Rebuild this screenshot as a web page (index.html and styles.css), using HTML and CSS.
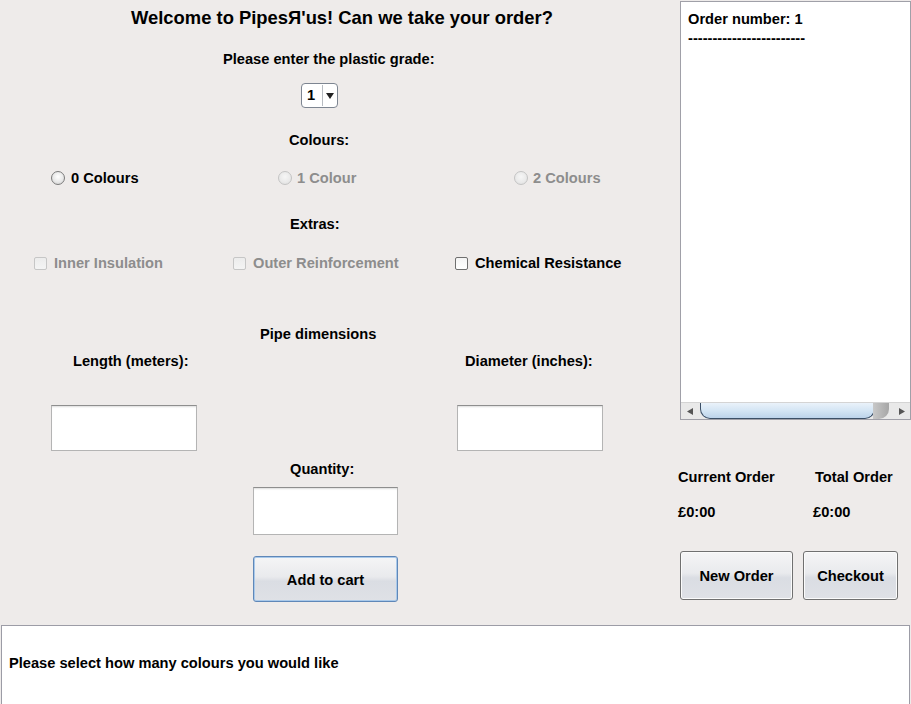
FILE: index.html
```html
<!DOCTYPE html>
<html>
<head>
<meta charset="utf-8">
<link rel="stylesheet" href="styles.css">
</head>
<body>
<div class="top">
  <div class="form">
    <div class="row title">Welcome to PipesЯ'us! Can we take your order?</div>
    <div class="row plastic">Please enter the plastic grade:</div>
    <div class="combo"><span class="combo-val">1</span><span class="combo-btn"><svg width="8" height="6" viewBox="0 0 8 6"><path d="M0 0H8L4 6Z" fill="#222"/></svg></span></div>
    <div class="row colours-lbl">Colours:</div>
    <div class="row radios">
      <label class="opt"><span class="radio"></span>0 Colours</label>
      <label class="opt dis"><span class="radio"></span>1 Colour</label>
      <label class="opt dis"><span class="radio"></span>2 Colours</label>
    </div>
    <div class="row extras-lbl">Extras:</div>
    <div class="row checks">
      <label class="opt dis"><span class="check"></span>Inner Insulation</label>
      <label class="opt dis"><span class="check"></span>Outer Reinforcement</label>
      <label class="opt"><span class="check"></span>Chemical Resistance</label>
    </div>
    <div class="row pipe-lbl">Pipe dimensions</div>
    <div class="row dims-lbl"><span>Length (meters):</span><span>Diameter (inches):</span></div>
    <div class="dims-fields"><div class="field"></div><div class="field"></div></div>
    <div class="row qty-lbl">Quantity:</div>
    <div class="field qty"></div>
    <div class="btn add">Add to cart</div>
  </div>
  <div class="side">
    <div class="order-panel">
      <div class="order-text">
        <div>Order number: 1</div>
        <div>------------------------</div>
      </div>
      <div class="hscroll">
        <span class="arrow"><svg width="6" height="7" viewBox="0 0 6 7"><path d="M0 3.5L6 0V7Z" fill="#555"/></svg></span>
        <span class="track"><span class="thumb"></span><span class="thumb-end"></span></span>
        <span class="arrow"><svg width="6" height="7" viewBox="0 0 6 7"><path d="M6 3.5L0 0V7Z" fill="#555"/></svg></span>
      </div>
    </div>
    <div class="row totals-lbl"><span>Current Order</span><span>Total Order</span></div>
    <div class="row totals-val"><span>£0:00</span><span>£0:00</span></div>
    <div class="side-btns"><div class="btn new">New Order</div><div class="btn checkout">Checkout</div></div>
  </div>
</div>
<div class="bottom">Please select how many colours you would like</div>
</body>
</html>
```
FILE: styles.css
```css
html, body {
  margin: 0;
  padding: 0;
}
body {
  background: #eeebea;
  font-family: "Liberation Sans", Arial, sans-serif;
  font-weight: bold;
  font-size: 14.65px;
  color: #000;
  width: 911px;
  height: 704px;
  overflow: hidden;
}
.top {
  display: flex;
  height: 625px;
}
.form {
  width: 678px;
  display: flex;
  flex-direction: column;
  align-items: flex-start;
}
.row {
  line-height: 16px;
  white-space: nowrap;
}
.title {
  font-size: 18.4px;
  line-height: 22px;
  margin-top: 7px;
  padding-left: 131px;
}
.plastic {
  margin-top: 22px;
  padding-left: 223px;
}
.combo {
  margin-top: 16px;
  margin-left: 301px;
  width: 37px;
  height: 25px;
  box-sizing: border-box;
  border: 1px solid #7d8591;
  border-radius: 4px;
  background: #fff;
  display: flex;
}
.combo-val {
  width: 20px;
  line-height: 23px;
  padding-left: 5px;
  box-sizing: border-box;
}
.combo-btn {
  flex: 1;
  border-left: 1px solid #b8bcc2;
  display: flex;
  align-items: center;
  justify-content: center;
  margin: 1px 0;
}
.colours-lbl {
  margin-top: 24px;
  padding-left: 289px;
}
.radios {
  margin-top: 22px;
  padding-left: 51px;
  display: grid;
  grid-template-columns: 227px 236px auto;
}
.opt {
  display: flex;
  align-items: center;
}
.opt.dis {
  color: #8d8d8d;
}
.radio {
  width: 14px;
  height: 14px;
  box-sizing: border-box;
  border-radius: 50%;
  border: 1px solid #7b7b7b;
  background: radial-gradient(circle at 50% 40%, #ffffff 0%, #e8e8e8 55%, #c9c9c9 100%);
  margin-right: 6px;
}
.dis .radio {
  border-color: #c4c4c4;
  background: radial-gradient(circle at 50% 40%, #f6f6f6 0%, #e9e9e9 60%, #d8d8d8 100%);
  margin-right: 5px;
}
.extras-lbl {
  margin-top: 30px;
  padding-left: 290px;
}
.checks {
  margin-top: 23px;
  padding-left: 34px;
  display: grid;
  grid-template-columns: 199px 222px auto;
}
.check {
  width: 13px;
  height: 13px;
  box-sizing: border-box;
  border-radius: 2px;
  border: 1px solid #6f6f6f;
  background: linear-gradient(#f4f4f4, #ffffff);
  margin-right: 7px;
}
.dis .check {
  border-color: #c6c6c6;
  background: linear-gradient(#ececec, #f4f4f4);
}
.pipe-lbl {
  margin-top: 55px;
  padding-left: 260px;
}
.dims-lbl {
  margin-top: 11px;
  padding-left: 73px;
  display: grid;
  grid-template-columns: 392px auto;
}
.dims-fields {
  margin-top: 36px;
  padding-left: 51px;
  display: grid;
  grid-template-columns: 406px auto;
}
.field {
  width: 146px;
  height: 46px;
  box-sizing: border-box;
  background: #fff;
  border: 1px solid #b4b4b4;
  border-top-color: #8e8e8e;
  box-shadow: inset 0 2px 2px -1px #dcdcdc;
}
.qty-lbl {
  margin-top: 10px;
  padding-left: 290px;
}
.field.qty {
  margin-top: 10px;
  margin-left: 253px;
  width: 145px;
  height: 48px;
}
.btn {
  box-sizing: border-box;
  border: 1px solid #707070;
  border-radius: 3px;
  background: linear-gradient(#f5f5f6 0%, #e9eaed 45%, #dadde3 55%, #dfe1e6 100%);
  display: flex;
  align-items: center;
  justify-content: center;
  box-shadow: inset 0 0 0 1px #fbfbfb;
}
.btn.add {
  margin-top: 21px;
  margin-left: 253px;
  width: 145px;
  height: 46px;
  border-color: #5f87b8;
  box-shadow: inset 0 0 0 1px #a9c9ea;
  padding-top: 1px;
}
.side {
  width: 233px;
  display: flex;
  flex-direction: column;
  align-items: flex-start;
}
.order-panel {
  margin-top: 1px;
  margin-left: 2px;
  width: 231px;
  height: 419px;
  box-sizing: border-box;
  border: 1px solid #a0a0a8;
  background: #fff;
  display: flex;
  flex-direction: column;
}
.order-text {
  flex: 1;
  padding: 8px 0 0 7px;
  line-height: 19px;
}
.hscroll {
  height: 16px;
  display: flex;
  background: #e9e9e9;
  border-top: 1px solid #d4d4d4;
}
.arrow {
  width: 17px;
  display: flex;
  align-items: center;
  justify-content: center;
}
.track {
  flex: 1;
  display: flex;
}
.thumb {
  width: 175px;
  box-sizing: border-box;
  border: 1px solid #3b4f66;
  border-top: 0;
  border-radius: 0 0 10px 10px;
  background: linear-gradient(#eaf2fa 0%, #d4e5f4 50%, #bcd3ea 100%);
  margin-left: 2px;
}
.thumb-end {
  width: 16px;
  border-radius: 0 0 10px 0;
  background: linear-gradient(90deg, #c8c8c8, #a6a6a6);
  margin-left: -2px;
}
.totals-lbl {
  margin-top: 49px;
  display: grid;
  grid-template-columns: 137px auto;
}
.totals-val {
  margin-top: 19px;
  display: grid;
  grid-template-columns: 135px auto;
}
.side-btns {
  margin-top: 31px;
  margin-left: 2px;
  display: flex;
  gap: 10px;
}
.btn.new {
  width: 113px;
  height: 49px;
}
.btn.checkout {
  width: 95px;
  height: 49px;
}
.bottom {
  margin-left: 1px;
  width: 909px;
  height: 90px;
  box-sizing: border-box;
  background: #fff;
  border: 1px solid #9c9ca6;
  padding: 29px 0 0 7px;
  line-height: 16px;
  white-space: nowrap;
}
```
